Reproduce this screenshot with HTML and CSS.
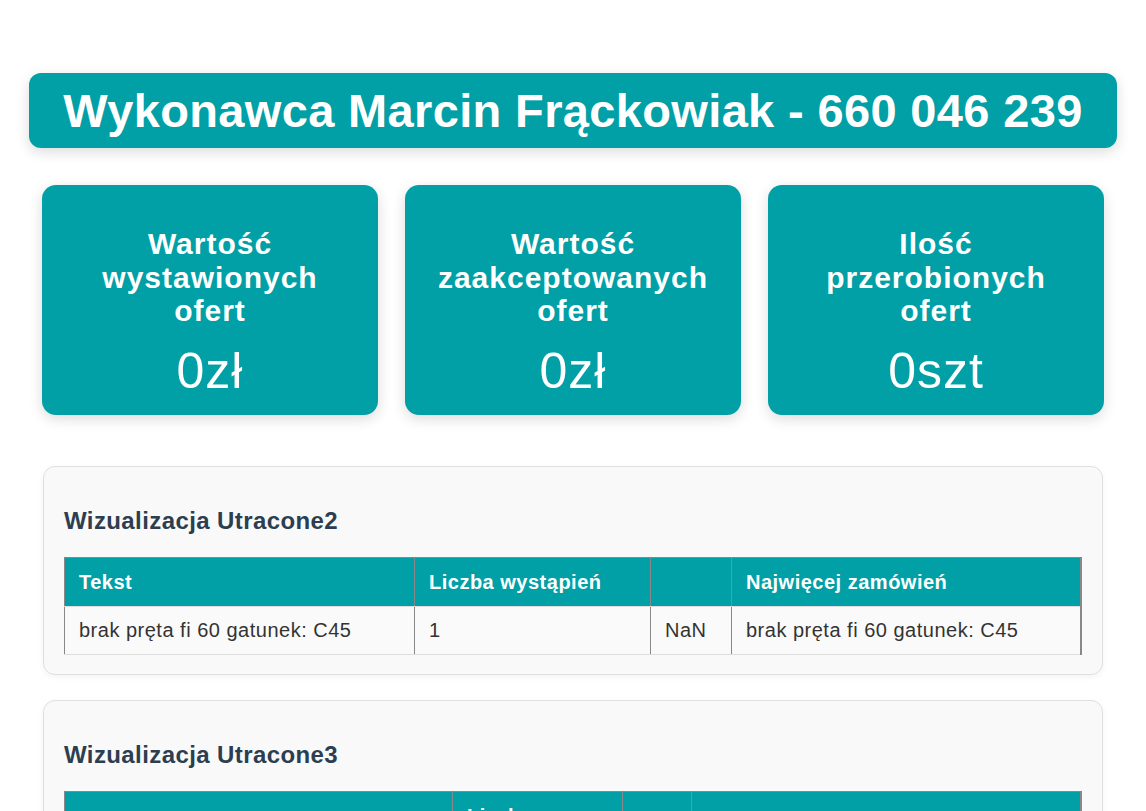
FILE: index.html
```html
<!DOCTYPE html>
<html lang="pl">
<head>
  <meta charset="UTF-8">
  <title>Wykonawca</title>
  <link rel="stylesheet" href="styles.css">
</head>
<body>

  <div class="page">
    <!-- Header -->
    <div class="header">
      <h1>Wykonawca Marcin Frąckowiak - 660 046 239</h1>
    </div>

    <!-- Stats -->
    <div class="stats">
      <div class="stat-card">
        <h3>Wartość wystawionych ofert</h3>
        <p class="stat-value">0zł</p>
      </div>
      <div class="stat-card">
        <h3>Wartość zaakceptowanych ofert</h3>
        <p class="stat-value">0zł</p>
      </div>
      <div class="stat-card">
        <h3>Ilość przerobionych ofert</h3>
        <p class="stat-value">0szt</p>
      </div>
    </div>

    <!-- Utracone2 -->
    <div class="section">
      <h2>Wizualizacja Utracone2</h2>
      <table class="data-table">
        <colgroup>
          <col class="c-text">
          <col class="c-count">
          <col class="c-num">
          <col class="c-most">
        </colgroup>
        <thead>
          <tr>
            <th>Tekst</th>
            <th>Liczba wystąpień</th>
            <th></th>
            <th>Najwięcej zamówień</th>
          </tr>
        </thead>
        <tbody>
          <tr>
            <td>brak pręta fi 60 gatunek: C45</td>
            <td>1</td>
            <td>NaN</td>
            <td>brak pręta fi 60 gatunek: C45</td>
          </tr>
        </tbody>
      </table>
    </div>

    <!-- Utracone3 -->
    <div class="section">
      <h2>Wizualizacja Utracone3</h2>
      <table class="data-table table-wide">
        <colgroup>
          <col class="c-text">
          <col class="c-count">
          <col class="c-num">
          <col class="c-most">
        </colgroup>
        <thead>
          <tr>
            <th>Tekst</th>
            <th>Liczba wystąpień</th>
            <th></th>
            <th>Najwięcej zamówień</th>
          </tr>
        </thead>
        <tbody>
          <tr>
            <td>za długi termin realizacji zamówienia</td>
            <td>1</td>
            <td>NaN</td>
            <td>za długi termin realizacji zamówienia</td>
          </tr>
        </tbody>
      </table>
    </div>
  </div>

</body>
</html>
```

FILE: styles.css
```css
body {
  margin: 0;
  padding: 0;
  background-color: #fff;
  font-family: "Liberation Sans", Arial, sans-serif;
  color: #333;
}

.page {
  padding: 73px 29px 40px;
}

.header {
  background-color: #00a0a6;
  border-radius: 12px;
  box-shadow: 0 4px 14px rgba(0, 0, 0, 0.14);
  padding: 10px 20px;
  text-align: center;
}

.header h1 {
  margin: 0;
  color: #fff;
  font-size: 47px;
  font-weight: bold;
  line-height: 55px;
  letter-spacing: 0.35px;
}

.stats {
  display: grid;
  grid-template-columns: repeat(3, 1fr);
  gap: 27px;
  margin: 37px 13px 0;
}

.stat-card {
  background-color: #00a0a6;
  border-radius: 14px;
  box-shadow: 0 4px 14px rgba(0, 0, 0, 0.14);
  color: #fff;
  text-align: center;
  padding: 42px 28px 16px;
  height: 230px;
  box-sizing: border-box;
}

.stat-card h3 {
  margin: 0;
  font-size: 30px;
  line-height: 33.5px;
  font-weight: bold;
  letter-spacing: 1px;
}

.stat-value {
  margin: 15px 0 0;
  font-size: 50px;
  line-height: 56px;
  letter-spacing: 1px;
}

.section {
  background-color: #f9f9f9;
  border: 1px solid #e0e0e0;
  border-radius: 12px;
  box-shadow: 0 2px 6px rgba(0, 0, 0, 0.05);
  margin: 51px 14px 0;
  padding: 20px 20px 19px;
}

.section + .section {
  margin-top: 25px;
}

.section h2 {
  margin: 20px 0 22px;
  font-size: 24px;
  line-height: 28px;
  letter-spacing: 0.4px;
  color: #2c3e50;
}

.data-table {
  width: 100%;
  border-collapse: collapse;
  table-layout: fixed;
  font-size: 20px;
  letter-spacing: 0.5px;
}

.data-table th,
.data-table td {
  text-align: left;
  padding: 12px 14px;
  line-height: 24px;
  border-left: 1px solid #888;
  border-right: 1px solid #888;
}

.data-table th {
  background-color: #00a0a6;
  color: #fff;
  font-weight: bold;
  border-top: 1px solid #888;
  border-bottom: 1px solid #ddd;
}

.data-table td {
  padding: 11px 14px 12px;
  background-color: #fafafa;
  border-bottom: 1px solid #ddd;
}

.data-table tr > :last-child {
  border-right: 2px solid #888;
}

.c-text { width: 350px; }
.c-count { width: 236px; }
.c-num { width: 81px; }

.table-wide .c-text { width: 388px; }
.table-wide .c-count { width: 170px; }
.table-wide .c-num { width: 69px; }
```
